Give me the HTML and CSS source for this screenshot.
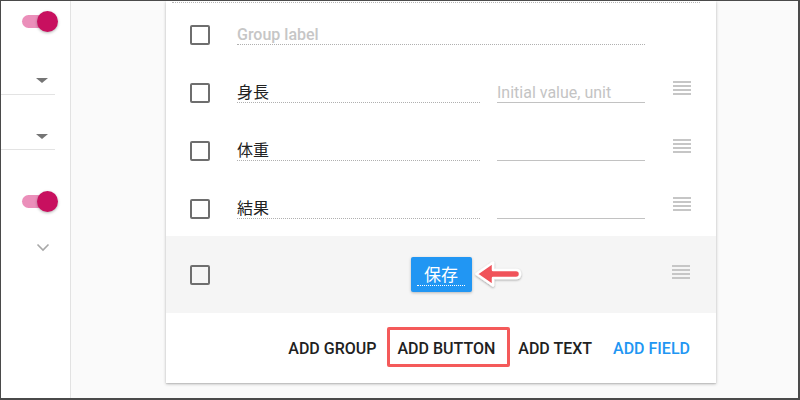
FILE: index.html
```html
<!DOCTYPE html>
<html lang="ja">
<head>
    <meta charset="UTF-8">
    <meta name="viewport" content="width=device-width, initial-scale=1.0">
    <title>Form editor</title>
    <link rel="stylesheet" href="styles.css">
</head>
<body>
    <div class="app">
        <div class="sidebar">
            <div class="sb-row sb-first">
                <span class="toggle"><span class="thumb"></span></span>
            </div>
            <div class="sb-select sb-select-1"><span class="caret"></span></div>
            <div class="sb-select sb-select-2"><span class="caret"></span></div>
            <div class="sb-row sb-second">
                <span class="toggle"><span class="thumb"></span></span>
            </div>
            <div class="sb-chevron">
                <svg width="14" height="9" viewBox="0 0 14 9"><path d="M1.5 1.5 L7 7 L12.5 1.5" fill="none" stroke="#a8a8a8" stroke-width="1.6"/></svg>
            </div>
        </div>

        <div class="main">
            <div class="card">
                <div class="top-line"></div>

                <div class="row">
                    <span class="checkbox"></span>
                    <div class="field field-wide placeholder label-ph">Group label</div>
                </div>

                <div class="row">
                    <span class="checkbox"></span>
                    <div class="field">身長</div>
                    <div class="field field-unit placeholder">Initial value, unit</div>
                    <span class="handle"></span>
                </div>

                <div class="row">
                    <span class="checkbox"></span>
                    <div class="field">体重</div>
                    <div class="field field-unit"></div>
                    <span class="handle"></span>
                </div>

                <div class="row row-last">
                    <span class="checkbox"></span>
                    <div class="field">結果</div>
                    <div class="field field-unit"></div>
                    <span class="handle"></span>
                </div>

                <div class="row row-button">
                    <span class="checkbox"></span>
                    <div class="button-slot">
                        <div class="save-wrap">
                            <button class="save"><span>保存</span></button>
                            <svg class="pointer" width="50" height="32" viewBox="0 0 50 32">
                                <defs>
                                    <filter id="sh" x="-20%" y="-30%" width="140%" height="160%">
                                        <feDropShadow dx="0" dy="1" stdDeviation="1.3" flood-color="#000" flood-opacity="0.35"/>
                                    </filter>
                                </defs>
                                <path d="M2.5 16 L19 4.5 L19 12 L42 12 Q46 12 46 16 Q46 20 42 20 L19 20 L19 27.5 Z"
                                      fill="#f0525a" stroke="#fff" stroke-width="2.5" stroke-linejoin="round" filter="url(#sh)"/>
                            </svg>
                        </div>
                    </div>
                    <span class="handle"></span>
                </div>

                <div class="actions">
                    <button class="act">Add group</button>
                    <button class="act act-marked">Add button</button>
                    <button class="act">Add text</button>
                    <button class="act act-primary">Add field</button>
                </div>
            </div>
        </div>
    </div>
</body>
</html>
```

FILE: styles.css
```css
body {
    margin: 0;
    padding: 0;
    font-family: Roboto, "Noto Sans CJK JP", sans-serif;
    color: #212121;
}
.app {
    width: 800px;
    height: 400px;
    box-sizing: border-box;
    border-style: solid;
    border-color: #4a4a4a;
    border-width: 1px 2px 2px 1px;
    display: flex;
    overflow: hidden;
    background: #fafafa;
}

/* left settings column */
.sidebar {
    width: 69px;
    flex-shrink: 0;
    background: white;
    border-right: 1px solid #e2e2e2;
    display: flex;
    flex-direction: column;
}
.sb-row {
    height: 40px;
    display: flex;
    align-items: center;
    justify-content: flex-end;
    padding-right: 12px;
}
.sb-second {
    margin-top: 31px;
}
.toggle {
    position: relative;
    width: 34px;
    height: 13px;
    border-radius: 7px;
    background: #eb8fba;
    margin-right: 2px;
}
.thumb {
    position: absolute;
    right: -2px;
    top: -4px;
    width: 21px;
    height: 21px;
    border-radius: 50%;
    background: #c8105f;
    box-shadow: 0 1px 3px rgba(0, 0, 0, 0.3);
}
.sb-select {
    width: 54px;
    border-bottom: 1px solid #e3e3e3;
    display: flex;
    align-items: flex-end;
    justify-content: flex-end;
    box-sizing: border-box;
}
.sb-select-1 {
    height: 54px;
    padding-bottom: 11px;
}
.sb-select-2 {
    height: 55px;
    padding-bottom: 10px;
}
.caret {
    width: 0;
    height: 0;
    border-left: 6px solid transparent;
    border-right: 6px solid transparent;
    border-top: 5px solid #757575;
    margin-right: 7px;
}
.sb-chevron {
    display: flex;
    justify-content: flex-end;
    padding-right: 20px;
    padding-top: 22px;
}

/* form card */
.main {
    flex: 1;
}
.card {
    width: 550px;
    height: 382px;
    margin-left: 95px;
    background: white;
    box-shadow: 0 1px 3px rgba(0, 0, 0, 0.25), 0 1px 1px rgba(0, 0, 0, 0.08);
    display: flex;
    flex-direction: column;
}
.top-line {
    height: 1px;
    margin: 0 16px 3px 6px;
    border-bottom: 1px dotted #b5b5b5;
}
.row {
    height: 58px;
    flex-shrink: 0;
    display: flex;
    align-items: center;
}
.row-last {
    height: 56px;
    align-items: flex-start;
}
.row-last .checkbox {
    margin-top: 19px;
}
.row-last .field {
    margin-top: 19px;
}
.checkbox {
    width: 16px;
    height: 16px;
    border: 2px solid #6e6e6e;
    border-radius: 2px;
    margin-left: 24px;
    flex-shrink: 0;
}
.field {
    width: 243px;
    height: 19px;
    line-height: 19px;
    font-size: 16px;
    margin-left: 27px;
    border-bottom: 1px dotted #b0b0b0;
    white-space: nowrap;
    color: #222;
}
.field-wide {
    width: 408px;
}
.field-unit {
    width: 148px;
    margin-left: 17px;
    border-bottom: 1px solid #c2c2c2;
}
.placeholder {
    color: #c4c4c4;
}
.label-ph {
    font-weight: 500;
    color: #c6c6c6;
}
.handle {
    align-self: flex-start;
    width: 18px;
    height: 2px;
    margin-left: 28px;
    margin-top: 17px;
    background: #c6c6c6;
    box-shadow: 0 4px 0 #c6c6c6, 0 8px 0 #c6c6c6, 0 12px 0 #c6c6c6;
    flex-shrink: 0;
}
.row-button {
    height: 77px;
    background: #f5f5f5;
}
.button-slot {
    flex: 1;
    display: flex;
    justify-content: center;
}
.row-button .handle {
    margin-left: 0;
    margin-right: 26px;
    margin-top: 29px;
}
.save-wrap {
    position: relative;
}
.save {
    width: 61px;
    height: 35px;
    border: none;
    border-radius: 2px;
    background: #2196f3;
    color: white;
    font-family: "Noto Sans CJK JP", sans-serif;
    font-size: 17px;
    padding: 0 0 6px;
    box-shadow: 0 1px 3px rgba(0, 0, 0, 0.25);
    display: flex;
    justify-content: center;
    align-items: flex-end;
    box-sizing: border-box;
}
.save span {
    display: block;
    width: 48px;
    line-height: 22px;
    border-bottom: 1px dotted white;
}
.pointer {
    position: absolute;
    left: 63px;
    top: 1px;
}

/* bottom actions */
.actions {
    height: 70px;
    display: flex;
    align-items: center;
    justify-content: flex-end;
    padding-right: 16px;
}
.act {
    height: 36px;
    padding: 0 10px;
    margin-left: 1px;
    border: none;
    background: none;
    font-family: Roboto, sans-serif;
    font-weight: 500;
    font-size: 16px;
    text-transform: uppercase;
    color: #212121;
}
.act-primary {
    color: #2196f3;
}
.act-marked {
    position: relative;
    padding-right: 12px;
}
.act-marked::after {
    content: "";
    position: absolute;
    left: 0;
    right: -3px;
    top: -3px;
    bottom: -1px;
    border: 3px solid #f45a5a;
    border-radius: 2px;
}
```
